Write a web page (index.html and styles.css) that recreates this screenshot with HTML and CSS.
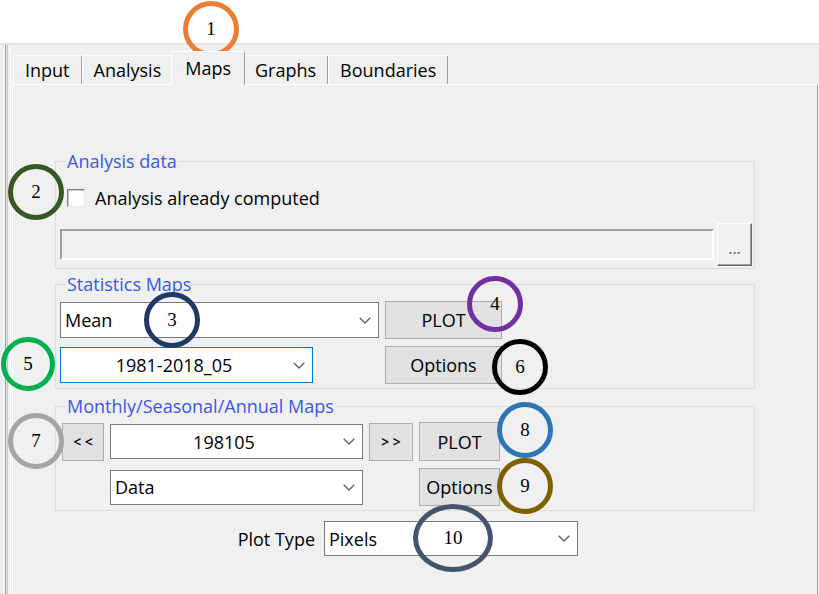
FILE: index.html
```html
<!DOCTYPE html>
<html>
<head>
<meta charset="utf-8">
<link rel="stylesheet" href="styles.css">
</head>
<body>
<div class="topbar"></div>
<div class="frame">
  <div class="rail"></div>
  <div class="tabctl">
    <div class="tabs">
      <div class="tab">Input</div>
      <div class="tab">Analysis</div>
      <div class="tab selected">Maps</div>
      <div class="tab">Graphs</div>
      <div class="tab">Boundaries</div>
    </div>
    <div class="panel">
      <fieldset class="group g-analysis">
        <legend>Analysis data</legend>
        <label class="check-row"><span class="checkbox"></span>Analysis already computed</label>
        <div class="path-row">
          <div class="path-field"></div>
          <button class="browse">...</button>
        </div>
      </fieldset>

      <fieldset class="group g-stats">
        <legend>Statistics Maps</legend>
        <div class="stats-grid">
          <div class="combo"><span class="value">Mean</span><svg class="chev" viewBox="0 0 12 7"><path d="M0.7 0.7 L6 6 L11.3 0.7"/></svg></div>
          <button class="btn">PLOT</button>
          <div class="combo focused narrow"><span class="value center">1981-2018_05</span><svg class="chev" viewBox="0 0 12 7"><path d="M0.7 0.7 L6 6 L11.3 0.7"/></svg></div>
          <button class="btn">Options</button>
        </div>
      </fieldset>

      <fieldset class="group g-monthly">
        <legend>Monthly/Seasonal/Annual Maps</legend>
        <div class="monthly-grid">
          <button class="btn nav">&lt; &lt;</button>
          <div class="combo"><span class="value center">198105</span><svg class="chev" viewBox="0 0 12 7"><path d="M0.7 0.7 L6 6 L11.3 0.7"/></svg></div>
          <button class="btn nav">&gt; &gt;</button>
          <button class="btn">PLOT</button>
          <div class="combo col2"><span class="value">Data</span><svg class="chev" viewBox="0 0 12 7"><path d="M0.7 0.7 L6 6 L11.3 0.7"/></svg></div>
          <button class="btn col4 tall">Options</button>
        </div>
      </fieldset>

      <div class="plot-row">
        <span class="plot-label">Plot Type</span>
        <div class="combo plot-combo"><span class="value">Pixels</span><svg class="chev" viewBox="0 0 12 7"><path d="M0.7 0.7 L6 6 L11.3 0.7"/></svg></div>
      </div>
    </div>
  </div>
</div>

<div class="marks">
  <div class="mark m1">1</div>
  <div class="mark m2">2</div>
  <div class="mark m3">3</div>
  <div class="mark m4">4</div>
  <div class="mark m5">5</div>
  <div class="mark m6">6</div>
  <div class="mark m7">7</div>
  <div class="mark m8">8</div>
  <div class="mark m9">9</div>
  <div class="mark m10">10</div>
</div>
</body>
</html>
```

FILE: styles.css
```css
html, body {
  margin: 0;
  padding: 0;
}
body {
  width: 819px;
  height: 594px;
  overflow: hidden;
  position: relative;
  background: #f0f0f0;
  font-family: "Open Sans", "Noto Sans", sans-serif;
  font-size: 18px;
  color: #000;
}
.topbar {
  height: 43px;
  background: #fff;
  border-bottom: 2px solid #e3e3e3;
}
.frame {
  display: flex;
  height: 549px;
}
.rail {
  width: 12px;
  flex: none;
  background: linear-gradient(to right,
    #f0f0f0 0 5px, #a0a0a0 5px 6px, #e8e8e8 6px 7px, #c4c4c4 7px 8px,
    #f0f0f0 8px 10px, #ffffff 10px 11px, #f0f0f0 11px 12px);
}
.tabctl {
  width: 806px;
  display: flex;
  flex-direction: column;
}
.tabs {
  display: flex;
  align-items: flex-end;
  height: 33px;
  margin-top: 6px;
  padding-left: 1px;
  position: relative;
  z-index: 1;
}
.tab {
  height: 29px;
  box-sizing: border-box;
  padding: 0 11px;
  display: flex;
  align-items: center;
  border-top: 1px solid #fff;
  border-left: 1px solid #fff;
  border-right: 1px solid #a0a0a0;
  border-radius: 2px 2px 0 0;
  background: #f0f0f0;
  line-height: 20px;
}
.tab.selected {
  height: 34px;
  margin: 0 -2px -1px -2px;
  padding: 0 13px 1px 13px;
  position: relative;
  z-index: 2;
}
.panel {
  flex: 1;
  border-top: 1px solid #fff;
  border-left: 1px solid #fff;
  border-right: 1px solid #a0a0a0;
  padding-top: 66px;
}
.group {
  margin: 0 0 0 42px;
  width: 700px;
  box-sizing: border-box;
  border: 1px solid #dcdcdc;
  padding: 0;
  min-width: 0;
}
.group legend {
  margin-left: 10px;
  padding: 0 1px;
  line-height: 20px;
  color: #3a57e8;
}
.g-analysis { padding-bottom: 2px; }
.g-stats { margin-top: 5px; padding-bottom: 4px; }
.g-monthly { margin-top: 7px; padding-bottom: 4px; }

.check-row {
  display: flex;
  align-items: center;
  gap: 10px;
  height: 20px;
  margin-top: 17px;
  padding-left: 11px;
  line-height: 20px;
}
.checkbox {
  width: 18px;
  height: 18px;
  box-sizing: border-box;
  background: #fff;
  border: 1px solid;
  border-color: #808080 #e8e8e8 #e8e8e8 #808080;
  box-shadow: inset 1px 1px 0 #c8c8c8;
}
.path-row {
  display: flex;
  align-items: center;
  height: 43px;
  margin-top: 15px;
  padding-left: 4px;
}
.path-field {
  width: 654px;
  height: 31px;
  box-sizing: border-box;
  background: #f0f0f0;
  border: 2px solid;
  border-color: #a0a0a0 #fff #fff #a0a0a0;
}
.browse {
  margin-left: 3px;
  width: 35px;
  height: 43px;
  box-sizing: border-box;
  background: #f0f0f0;
  border: 1px solid;
  border-color: #fff #696969 #696969 #fff;
  box-shadow: inset -1px -1px 0 #a0a0a0;
  font-family: "Open Sans", sans-serif;
  font-size: 15px;
  font-weight: 600;
  color: #6a6a8a;
  padding: 6px 0 0 0;
  line-height: 20px;
}

.combo {
  display: flex;
  align-items: center;
  height: 36px;
  box-sizing: border-box;
  background: #fff;
  border: 1px solid #7a7a7a;
  padding-left: 4px;
  line-height: 20px;
}
.combo .value {
  flex: 1;
  white-space: nowrap;
}
.combo .value.center {
  text-align: center;
  padding-right: 2px;
}
.chev {
  width: 12px;
  height: 7px;
  margin: 0 7px 0 8px;
  flex: none;
}
.chev path {
  fill: none;
  stroke: #606060;
  stroke-width: 1.3;
}
.combo.focused {
  border-color: #0078d7;
}
.btn {
  height: 38px;
  box-sizing: border-box;
  background: #e1e1e1;
  border: 1px solid #adadad;
  font-family: "Open Sans", "Noto Sans", sans-serif;
  font-size: 18px;
  color: #000;
  padding: 0;
  line-height: 20px;
}

.stats-grid {
  display: grid;
  grid-template-columns: 319px 117px;
  grid-template-rows: 38px 38px;
  column-gap: 6px;
  row-gap: 7px;
  align-items: center;
  margin-top: 7px;
  padding-left: 4px;
}
.stats-grid .combo.narrow {
  width: 253px;
}

.monthly-grid {
  display: grid;
  grid-template-columns: 42px 253px 44px 81px;
  grid-template-rows: 39px 38px;
  column-gap: 6px;
  row-gap: 7px;
  align-items: center;
  margin-top: 6px;
  padding-left: 6px;
}
.monthly-grid .combo {
  height: 35px;
}
.monthly-grid .btn {
  height: 39px;
}
.monthly-grid .btn.nav {
  height: 38px;
  font-size: 14px;
  font-weight: 600;
  letter-spacing: 0;
}
.monthly-grid .btn.tall {
  height: 38px;
}
.col2 { grid-column: 2; }
.col4 { grid-column: 4; }

.plot-row {
  display: flex;
  justify-content: flex-end;
  align-items: center;
  gap: 9px;
  width: 565px;
  margin-top: 10px;
}
.plot-combo {
  width: 254px;
  height: 35px;
}

.marks {
  position: absolute;
  inset: 0;
  pointer-events: none;
}
.mark {
  position: absolute;
  width: 56px;
  height: 56px;
  box-sizing: border-box;
  border: 5px solid;
  border-radius: 50%;
  display: flex;
  align-items: center;
  justify-content: center;
  font-family: "Liberation Serif", serif;
  font-size: 19px;
  color: #000;
  background: transparent;
}
.m1 { left: 183px; top: 1px; border-color: #ed7d31; }
.m2 { left: 8px; top: 164px; border-color: #385723; }
.m3 { left: 144px; top: 292px; border-color: #203864; }
.m4 { left: 467px; top: 276px; border-color: #7030a0; }
.m5 { left: 1px; top: 337px; width: 54px; height: 54px; border-color: #00b050; }
.m6 { left: 492px; top: 339px; border-color: #000; }
.m7 { left: 8px; top: 413px; border-color: #a5a5a5; }
.m8 { left: 497px; top: 402px; border-color: #2e75b6; }
.m9 { left: 497px; top: 458px; border-color: #7f6000; }
.m10 { left: 413px; top: 504px; width: 80px; height: 68px; border-color: #44546a; }
```
